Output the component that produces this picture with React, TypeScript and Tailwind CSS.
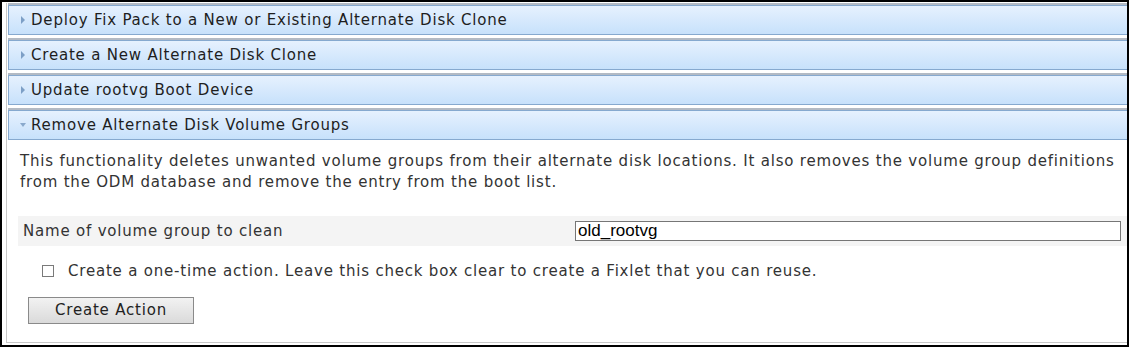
import { useState } from "react";

const sections = [
  "Deploy Fix Pack to a New or Existing Alternate Disk Clone",
  "Create a New Alternate Disk Clone",
  "Update rootvg Boot Device",
];

function Header({ title, open }: { title: string; open?: boolean }) {
  return (
    <div className="border-t-2 border-[#b3bac4] mb-[3px]">
      <div className="h-[30px] flex items-center border border-[#86a9cf] border-r-0 bg-gradient-to-b from-[#e6f1fe] to-[#c7e1fb] pl-[11px]">
        {open ? (
          <span className="w-0 h-0 border-l-[3px] border-r-[3px] border-t-[4px] border-l-transparent border-r-transparent border-t-[#8aa9cc] mr-[5px]" />
        ) : (
          <span className="w-0 h-0 border-t-[4px] border-b-[4px] border-l-[4px] border-t-transparent border-b-transparent border-l-[#7d9fc6] mr-[6px] ml-[1px]" />
        )}
        <span className="text-[#1e1e1e] text-[15px] tracking-[0.8px]">{title}</span>
      </div>
    </div>
  );
}

export default function App() {
  const [vg, setVg] = useState("old_rootvg");
  const [oneTime, setOneTime] = useState(false);

  return (
    <div
      className="w-[1129px] h-[347px] bg-black pt-[2px] pl-[2px] pr-[2px] pb-[2px]"
      style={{ fontFamily: '"DejaVu Sans", Verdana, sans-serif' }}
    >
      <div className="h-full bg-white pl-[4px] pt-[1px] pb-[2px]">
        <div className="h-full border-l border-b border-[#c8c8c8] pl-[1px]">
          {sections.map((s) => (
            <Header key={s} title={s} />
          ))}
          <Header title="Remove Alternate Disk Volume Groups" open />

          <p className="text-[#333] text-[15px] tracking-[0.8px] leading-[21px] pl-[12px] pt-[8px] pr-[8px]">
            This functionality deletes unwanted volume groups from their alternate disk locations. It also removes the
            volume group definitions from the ODM database and remove the entry from the boot list.
          </p>

          <div className="mt-[23px] ml-[10px] h-[30px] bg-[#f4f4f4] flex items-center">
            <span className="w-[557px] pl-[5px] text-[#333] text-[15px] tracking-[0.8px]">
              Name of volume group to clean
            </span>
            <input
              value={vg}
              onChange={(e) => setVg(e.target.value)}
              className="w-[546px] h-[20px] border border-[#767676] bg-white px-[2px] text-black text-[17px] outline-none"
              style={{ fontFamily: '"Liberation Sans", Arial, sans-serif' }}
            />
          </div>

          <label className="flex items-center mt-[13px] ml-[34px] h-[24px]">
            <input
              type="checkbox"
              checked={oneTime}
              onChange={(e) => setOneTime(e.target.checked)}
              className="appearance-none w-[12px] h-[12px] border border-[#7a7a7a] bg-white mr-[14px]"
            />
            <span className="text-[#333] text-[15px] tracking-[0.8px]">
              Create a one-time action. Leave this check box clear to create a Fixlet that you can reuse.
            </span>
          </label>

          <button
            type="button"
            className="mt-[14px] ml-[20px] w-[166px] h-[27px] border border-[#8a8a8a] bg-gradient-to-b from-[#f2f2f2] to-[#dadada] text-[#222] text-[15px] tracking-[0.8px]"
          >
            Create Action
          </button>
        </div>
      </div>
    </div>
  );
}
